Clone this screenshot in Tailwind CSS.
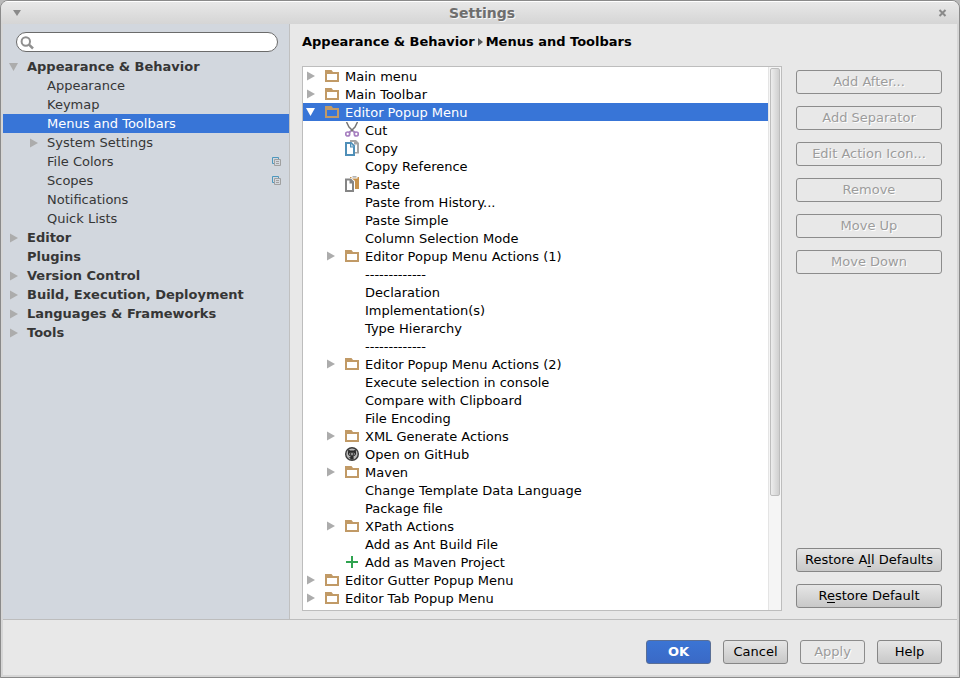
<!DOCTYPE html>
<html lang="en">
<head>
<meta charset="utf-8">
<meta name="viewport" content="width=device-width, initial-scale=1">
<title>Settings</title>
<script src="https://cdn.jsdelivr.net/npm/@tailwindcss/browser@4"></script>
</head>
<body class="bg-[#b9b9b9] font-['DejaVu_Sans',Verdana,sans-serif] text-[13px] text-black">

<svg class="hidden" aria-hidden="true">
  <symbol id="right" viewBox="0 0 8 10"><path d="M0 .5 8 5 0 9.500z" fill="#acacac"/></symbol>
  <symbol id="down" viewBox="0 0 9 8"><path d="M0 0h9L4.500 8z" fill="currentColor"/></symbol>
  <symbol id="folder" viewBox="0 0 14 16"><path fill="#c19a66" fill-rule="evenodd" d="M0 2h6.500l1.500 2h6v10H0zM2 6v6h10V6z"/></symbol>
  <symbol id="cut" viewBox="0 0 14 16">
    <path d="M1.500 0 4 5 9 10M12.500 0 10 5 5 10" fill="none" stroke="#777" stroke-width="1.500"/>
    <circle cx="2.700" cy="12" r="2" fill="none" stroke="#a77fc0" stroke-width="1.700"/>
    <circle cx="11.300" cy="12" r="2" fill="none" stroke="#a77fc0" stroke-width="1.700"/>
    <path d="M4 10.500 6 9M10 10.500 8 9" stroke="#a77fc0" stroke-width="1.700"/>
  </symbol>
  <symbol id="copy" viewBox="0 0 14 16">
    <path d="M5 0h6l3 3v10.500H5z" fill="#a5a5a5"/>
    <path d="M5 2h4v2.500h3V12H5z" fill="#fff"/>
    <path d="M0 2h6.500L10 5.500V16H0z" fill="#4f8fb8"/>
    <path d="M2 4h3v3.500h3V14H2z" fill="#fff"/>
    <path d="M6 3.800v2.700h2.700z" fill="#b9d6e6"/>
  </symbol>
  <symbol id="paste" viewBox="0 0 14 16">
    <path d="M5 1h9v12H5z" fill="#c8924a"/>
    <path d="M6.500 0h6v2.500h-6z" fill="#fff"/><path d="M7.500 .3h4v1.200h-4z" fill="#999"/>
    <path d="M0 2h6.500L10 5v11H0z" fill="#fff"/>
    <path d="M0 2.500h6L9 5.500V16H0z" fill="#858585"/>
    <path d="M2 4.500h2.500V7.500H7V14H2z" fill="#fff"/>
  </symbol>
  <symbol id="github" viewBox="0 0 14 16">
    <circle cx="7" cy="8" r="7" fill="#3a3a3a"/>
    <circle cx="7" cy="8" r="5.600" fill="#b8b8b8"/>
    <path d="M3.200 3.500 5.300 4.600h3.400l2.100-1.100.3 4.300c-.3 1.700-1.500 2.200-2.600 2.400l.2 3.300H5.300v-1.300l-1.800-1.200 1.900.2.100-1C4.400 10 3.200 9.500 2.900 7.800z" fill="#2b2b2b"/>
    <rect x="4" y="6.800" width="6" height="2.400" rx="1.200" fill="#8e8e8e"/>
    <path d="M5 7.300h1v1.400H5zM8 7.300h1v1.400H8z" fill="#2b2b2b"/>
  </symbol>
  <symbol id="plus" viewBox="0 0 14 16"><path d="M7 2v12M1 8h12" stroke="#2fa34f" stroke-width="2"/></symbol>
  <symbol id="project" viewBox="0 0 9 9">
    <path d="M2 6.500H.5v-6h6V2" fill="none" stroke="#4d97bd"/>
    <path d="M2.500 2.500h6v6h-6zM4 4.500h3M4 6.500h3" fill="none" stroke="#a0a0a0"/>
  </symbol>
</svg>

<div class="flex min-h-screen flex-col overflow-hidden rounded-t-lg border border-[#8a8a8a] bg-[#d6d6d6]">
  <header class="flex h-[23px] items-center border-t border-white bg-linear-to-b from-[#e8e8e8] to-[#d5d5d5] pr-2.5 pl-3">
    <button type="button" aria-label="Window menu" class="w-4 text-[#8a8a8a]"><svg class="h-1.5 w-2" preserveAspectRatio="none" viewBox="0 0 9 8"><path d="M0 0h9L4.500 8z" fill="currentColor"/></svg></button>
    <h1 class="flex-1 text-center text-sm font-bold text-[#6e6e6e] [text-shadow:1px_1px_0_#f6f6f6]">Settings</h1>
    <button type="button" aria-label="Close" class="flex w-3.5 justify-center"><svg class="h-2 w-[9px]" viewBox="0 0 9 8"><path d="M1.500 1 7.500 7M7.500 1 1.500 7" stroke="#8a8a8a" stroke-width="2"/></svg></button>
  </header>

  <div class="mx-0.5 mb-0.5 flex flex-1 flex-col bg-[#e8e8e8]">
    <div class="flex flex-1 border-b border-[#bdbdbd]">
      <aside class="w-[287px] shrink-0 border-r border-[#c0c0c0] bg-[#d2d7de] pt-2 text-[#363636]">
        <div class="relative ml-[13px] mr-[11px] mb-[5px]">
          <svg class="absolute left-1 top-1 size-[14px]" viewBox="0 0 14 14" fill="none" stroke="#8f8f8f"><circle cx="5.800" cy="5.500" r="4.200" stroke-width="2"/><path d="m9 8.700 4 3.800" stroke-width="2.500"/></svg>
          <input type="search" aria-label="Search settings" class="block h-5 w-full rounded-full border border-[#6b6b6b] bg-white pl-6 pr-2 outline-none">
        </div>
        <ul role="tree" aria-label="Settings categories" class="leading-[19px] whitespace-nowrap">
          <li role="treeitem" aria-expanded="true" class="flex h-[19px] items-center pl-1.5 font-bold"><svg class="mr-[9px] h-2 w-[9px] text-[#acacac]"><use href="#down"/></svg>Appearance &amp; Behavior</li>
          <li role="treeitem" class="h-[19px] pl-11">Appearance</li>
          <li role="treeitem" class="h-[19px] pl-11">Keymap</li>
          <li role="treeitem" aria-selected="true" class="h-[19px] bg-[#3875d7] pl-11 text-white">Menus and Toolbars</li>
          <li role="treeitem" aria-expanded="false" class="flex h-[19px] items-center pl-[27px]"><svg class="mr-[9px] h-2.5 w-2"><use href="#right"/></svg>System Settings</li>
          <li role="treeitem" class="flex h-[19px] items-center pl-11 pr-2"><span class="flex-1">File Colors</span><svg class="size-[9px]"><use href="#project"/></svg></li>
          <li role="treeitem" class="flex h-[19px] items-center pl-11 pr-2"><span class="flex-1">Scopes</span><svg class="size-[9px]"><use href="#project"/></svg></li>
          <li role="treeitem" class="h-[19px] pl-11">Notifications</li>
          <li role="treeitem" class="h-[19px] pl-11">Quick Lists</li>
          <li role="treeitem" aria-expanded="false" class="flex h-[19px] items-center pl-[7px] font-bold"><svg class="mr-[9px] h-2.5 w-2"><use href="#right"/></svg>Editor</li>
          <li role="treeitem" class="h-[19px] pl-6 font-bold">Plugins</li>
          <li role="treeitem" aria-expanded="false" class="flex h-[19px] items-center pl-[7px] font-bold"><svg class="mr-[9px] h-2.5 w-2"><use href="#right"/></svg>Version Control</li>
          <li role="treeitem" aria-expanded="false" class="flex h-[19px] items-center pl-[7px] font-bold"><svg class="mr-[9px] h-2.5 w-2"><use href="#right"/></svg>Build, Execution, Deployment</li>
          <li role="treeitem" aria-expanded="false" class="flex h-[19px] items-center pl-[7px] font-bold"><svg class="mr-[9px] h-2.5 w-2"><use href="#right"/></svg>Languages &amp; Frameworks</li>
          <li role="treeitem" aria-expanded="false" class="flex h-[19px] items-center pl-[7px] font-bold"><svg class="mr-[9px] h-2.5 w-2"><use href="#right"/></svg>Tools</li>
        </ul>
      </aside>

      <main class="flex min-w-0 flex-1 flex-col pt-2 pr-[15px] pb-2 pl-3">
        <nav aria-label="Breadcrumb" class="mb-3.5 flex h-5 items-center gap-[3px] font-bold">
          <span>Appearance &amp; Behavior</span>
          <svg class="h-2 w-[5px]" viewBox="0 0 5 8"><path d="M0 0 5 4 0 8z" fill="#555"/></svg>
          <span>Menus and Toolbars</span>
        </nav>
        <div class="flex flex-1 gap-3.5">
          <div class="flex min-w-0 flex-1 border border-[#bdbdbd] bg-white">
            <ul role="tree" aria-label="Menus and toolbars" class="min-w-0 flex-1 leading-5 whitespace-nowrap">
              <li role="treeitem" aria-expanded="false" class="flex h-[18px] items-start pl-1"><svg class="mr-2.5 h-2.5 w-2 self-center"><use href="#right"/></svg><svg class="mr-1.5 h-4 w-3.5 self-center"><use href="#folder"/></svg>Main menu</li>
              <li role="treeitem" aria-expanded="false" class="flex h-[18px] items-start pl-1"><svg class="mr-2.5 h-2.5 w-2 self-center"><use href="#right"/></svg><svg class="mr-1.5 h-4 w-3.5 self-center"><use href="#folder"/></svg>Main Toolbar</li>
              <li role="treeitem" aria-expanded="true" aria-selected="true" class="flex h-[18px] items-start bg-[#3875d7] pl-[3px] text-white"><svg class="mr-2.5 h-2 w-[9px] self-center"><use href="#down"/></svg><svg class="mr-1.5 h-4 w-3.5 self-center"><use href="#folder"/></svg>Editor Popup Menu</li>
              <li role="treeitem" class="flex h-[18px] items-start pl-[42px]"><svg class="mr-1.5 h-4 w-3.5 self-center"><use href="#cut"/></svg>Cut</li>
              <li role="treeitem" class="flex h-[18px] items-start pl-[42px]"><svg class="mr-1.5 h-4 w-3.5 self-center"><use href="#copy"/></svg>Copy</li>
              <li role="treeitem" class="h-[18px] pl-[62px]">Copy Reference</li>
              <li role="treeitem" class="flex h-[18px] items-start pl-[42px]"><svg class="mr-1.5 h-4 w-3.5 self-center"><use href="#paste"/></svg>Paste</li>
              <li role="treeitem" class="h-[18px] pl-[62px]">Paste from History...</li>
              <li role="treeitem" class="h-[18px] pl-[62px]">Paste Simple</li>
              <li role="treeitem" class="h-[18px] pl-[62px]">Column Selection Mode</li>
              <li role="treeitem" aria-expanded="false" class="flex h-[18px] items-start pl-6"><svg class="mr-2.5 h-2.5 w-2 self-center"><use href="#right"/></svg><svg class="mr-1.5 h-4 w-3.5 self-center"><use href="#folder"/></svg>Editor Popup Menu Actions (1)</li>
              <li role="treeitem" class="h-[18px] pl-[62px]">-------------</li>
              <li role="treeitem" class="h-[18px] pl-[62px]">Declaration</li>
              <li role="treeitem" class="h-[18px] pl-[62px]">Implementation(s)</li>
              <li role="treeitem" class="h-[18px] pl-[62px]">Type Hierarchy</li>
              <li role="treeitem" class="h-[18px] pl-[62px]">-------------</li>
              <li role="treeitem" aria-expanded="false" class="flex h-[18px] items-start pl-6"><svg class="mr-2.5 h-2.5 w-2 self-center"><use href="#right"/></svg><svg class="mr-1.5 h-4 w-3.5 self-center"><use href="#folder"/></svg>Editor Popup Menu Actions (2)</li>
              <li role="treeitem" class="h-[18px] pl-[62px]">Execute selection in console</li>
              <li role="treeitem" class="h-[18px] pl-[62px]">Compare with Clipboard</li>
              <li role="treeitem" class="h-[18px] pl-[62px]">File Encoding</li>
              <li role="treeitem" aria-expanded="false" class="flex h-[18px] items-start pl-6"><svg class="mr-2.5 h-2.5 w-2 self-center"><use href="#right"/></svg><svg class="mr-1.5 h-4 w-3.5 self-center"><use href="#folder"/></svg>XML Generate Actions</li>
              <li role="treeitem" class="flex h-[18px] items-start pl-[42px]"><svg class="mr-1.5 h-4 w-3.5 self-center"><use href="#github"/></svg>Open on GitHub</li>
              <li role="treeitem" aria-expanded="false" class="flex h-[18px] items-start pl-6"><svg class="mr-2.5 h-2.5 w-2 self-center"><use href="#right"/></svg><svg class="mr-1.5 h-4 w-3.5 self-center"><use href="#folder"/></svg>Maven</li>
              <li role="treeitem" class="h-[18px] pl-[62px]">Change Template Data Language</li>
              <li role="treeitem" class="h-[18px] pl-[62px]">Package file</li>
              <li role="treeitem" aria-expanded="false" class="flex h-[18px] items-start pl-6"><svg class="mr-2.5 h-2.5 w-2 self-center"><use href="#right"/></svg><svg class="mr-1.5 h-4 w-3.5 self-center"><use href="#folder"/></svg>XPath Actions</li>
              <li role="treeitem" class="h-[18px] pl-[62px]">Add as Ant Build File</li>
              <li role="treeitem" class="flex h-[18px] items-start pl-[42px]"><svg class="mr-1.5 h-4 w-3.5 self-center"><use href="#plus"/></svg>Add as Maven Project</li>
              <li role="treeitem" aria-expanded="false" class="flex h-[18px] items-start pl-1"><svg class="mr-2.5 h-2.5 w-2 self-center"><use href="#right"/></svg><svg class="mr-1.5 h-4 w-3.5 self-center"><use href="#folder"/></svg>Editor Gutter Popup Menu</li>
              <li role="treeitem" aria-expanded="false" class="flex h-[18px] items-start pl-1"><svg class="mr-2.5 h-2.5 w-2 self-center"><use href="#right"/></svg><svg class="mr-1.5 h-4 w-3.5 self-center"><use href="#folder"/></svg>Editor Tab Popup Menu</li>
            </ul>
            <div aria-hidden="true" class="w-[13px] border-l border-[#e4e4e4] bg-[#f5f5f5] px-px pt-px">
              <div class="h-[79%] rounded-xs border border-[#bdbdbd] bg-linear-to-r from-[#ededed] to-[#cfcfcf]"></div>
            </div>
          </div>
          <div class="flex w-[146px] shrink-0 flex-col gap-3 pt-1 pb-[3px]">
            <button type="button" disabled class="h-6 rounded-[3px] border border-[#8c8c8c] text-[#9c9c9c] [text-shadow:1px_1px_0_#fff]">Add After...</button>
            <button type="button" disabled class="h-6 rounded-[3px] border border-[#8c8c8c] text-[#9c9c9c] [text-shadow:1px_1px_0_#fff]">Add Separator</button>
            <button type="button" disabled class="h-6 rounded-[3px] border border-[#8c8c8c] text-[#9c9c9c] [text-shadow:1px_1px_0_#fff]">Edit Action Icon...</button>
            <button type="button" disabled class="h-6 rounded-[3px] border border-[#8c8c8c] text-[#9c9c9c] [text-shadow:1px_1px_0_#fff]">Remove</button>
            <button type="button" disabled class="h-6 rounded-[3px] border border-[#8c8c8c] text-[#9c9c9c] [text-shadow:1px_1px_0_#fff]">Move Up</button>
            <button type="button" disabled class="h-6 rounded-[3px] border border-[#8c8c8c] text-[#9c9c9c] [text-shadow:1px_1px_0_#fff]">Move Down</button>
            <button type="button" class="mt-auto h-6 rounded-[3px] border border-[#868686] bg-linear-to-b from-[#e6e6e6] to-[#c8c8c8]">Restore A<u class="underline-offset-2">l</u>l Defaults</button>
            <button type="button" class="h-6 rounded-[3px] border border-[#868686] bg-linear-to-b from-[#e6e6e6] to-[#c8c8c8]">R<u class="underline-offset-2">e</u>store Default</button>
          </div>
        </div>
      </main>
    </div>
    <footer class="flex justify-end gap-3 pt-5 pr-[15px] pb-[11px]">
      <button type="button" class="h-6 w-[65px] rounded-[3px] border border-[#5a6f96] bg-linear-to-b from-[#3b74d4] to-[#3a69c6] font-bold text-white">OK</button>
      <button type="button" class="h-6 w-[65px] rounded-[3px] border border-[#868686] bg-linear-to-b from-[#e6e6e6] to-[#c8c8c8]">Cancel</button>
      <button type="button" disabled class="h-6 w-[65px] rounded-[3px] border border-[#8c8c8c] text-[#9c9c9c] [text-shadow:1px_1px_0_#fff]">Apply</button>
      <button type="button" class="h-6 w-[65px] rounded-[3px] border border-[#868686] bg-linear-to-b from-[#e6e6e6] to-[#c8c8c8]">Help</button>
    </footer>
  </div>
</div>
</body>
</html>
